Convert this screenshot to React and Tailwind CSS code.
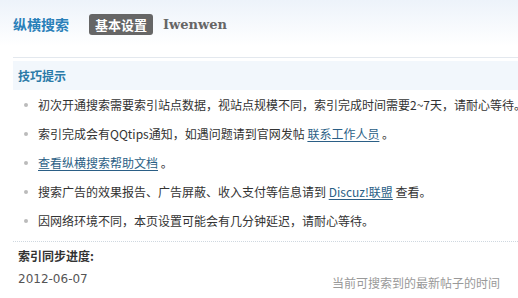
const tips = [
  { text: "初次开通搜索需要索引站点数据，视站点规模不同，索引完成时间需要2~7天，请耐心等待。" },
  { text: "索引完成会有QQtips通知，如遇问题请到官网发帖 ", link: "联系工作人员", after: " 。" },
  { text: " ", link: "查看纵横搜索帮助文档", after: " 。" },
  { text: "搜索广告的效果报告、广告屏蔽、收入支付等信息请到 ", link: "Discuz!联盟", after: " 查看。" },
  { text: "因网络环境不同，本页设置可能会有几分钟延迟，请耐心等待。" },
];

export default function App() {
  return (
    <div className="h-[298px] w-[518px] overflow-hidden bg-white font-['Noto_Sans_CJK_SC','DejaVu_Sans',sans-serif] text-[12px] text-[#333]">
      {/* Header */}
      <div className="bg-gradient-to-b from-[#edf3fa] to-white to-80% pl-[13px]">
        <div className="flex h-[58px] items-center border-b border-[#e3e8ee] pb-[8px]">
          <span className="text-[14px] font-bold text-[#2a80b9]">纵横搜索</span>
          <span className="ml-[20px] flex h-[21px] items-center rounded-[3px] bg-[#666] px-[6px] text-[13px] font-bold text-white">
            基本设置
          </span>
          <span className="ml-[10px] font-['DejaVu_Serif',serif] text-[13px] font-bold text-[#666]">Iwenwen</span>
        </div>
      </div>

      <div className="pl-[13px]">
        {/* Tips */}
        <div className="mt-[3px] flex h-[29px] items-center bg-[#f2f7fc] pl-[5px]">
          <span className="font-bold text-[#2a7aa8]">技巧提示</span>
        </div>
        <ul className="whitespace-nowrap">
          {tips.map((t, i) => (
            <li key={i} className="flex h-[29px] items-center">
              <span className="ml-[11px] mr-[10px] h-[4px] w-[4px] shrink-0 rounded-full bg-[#bbb]" />
              <span>
                {t.text}
                {t.link && <a className="text-[#2b5f86] underline underline-offset-2">{t.link}</a>}
                {t.after}
              </span>
            </li>
          ))}
        </ul>

        {/* Progress */}
        <div className="mt-[6px] border-t border-dotted border-[#cfd8e0] pl-[5px]">
          <div className="mt-[4px] flex h-[20px] items-center font-bold text-[#333]">索引同步进度:</div>
          <div className="mt-[4px] flex items-end justify-between pr-[18px]">
            <span className="font-['DejaVu_Sans',sans-serif] text-[12px] text-[#555]">2012-06-07</span>
            <span className="translate-y-[4px] text-[#999]">当前可搜索到的最新帖子的时间</span>
          </div>
        </div>
      </div>
    </div>
  );
}
